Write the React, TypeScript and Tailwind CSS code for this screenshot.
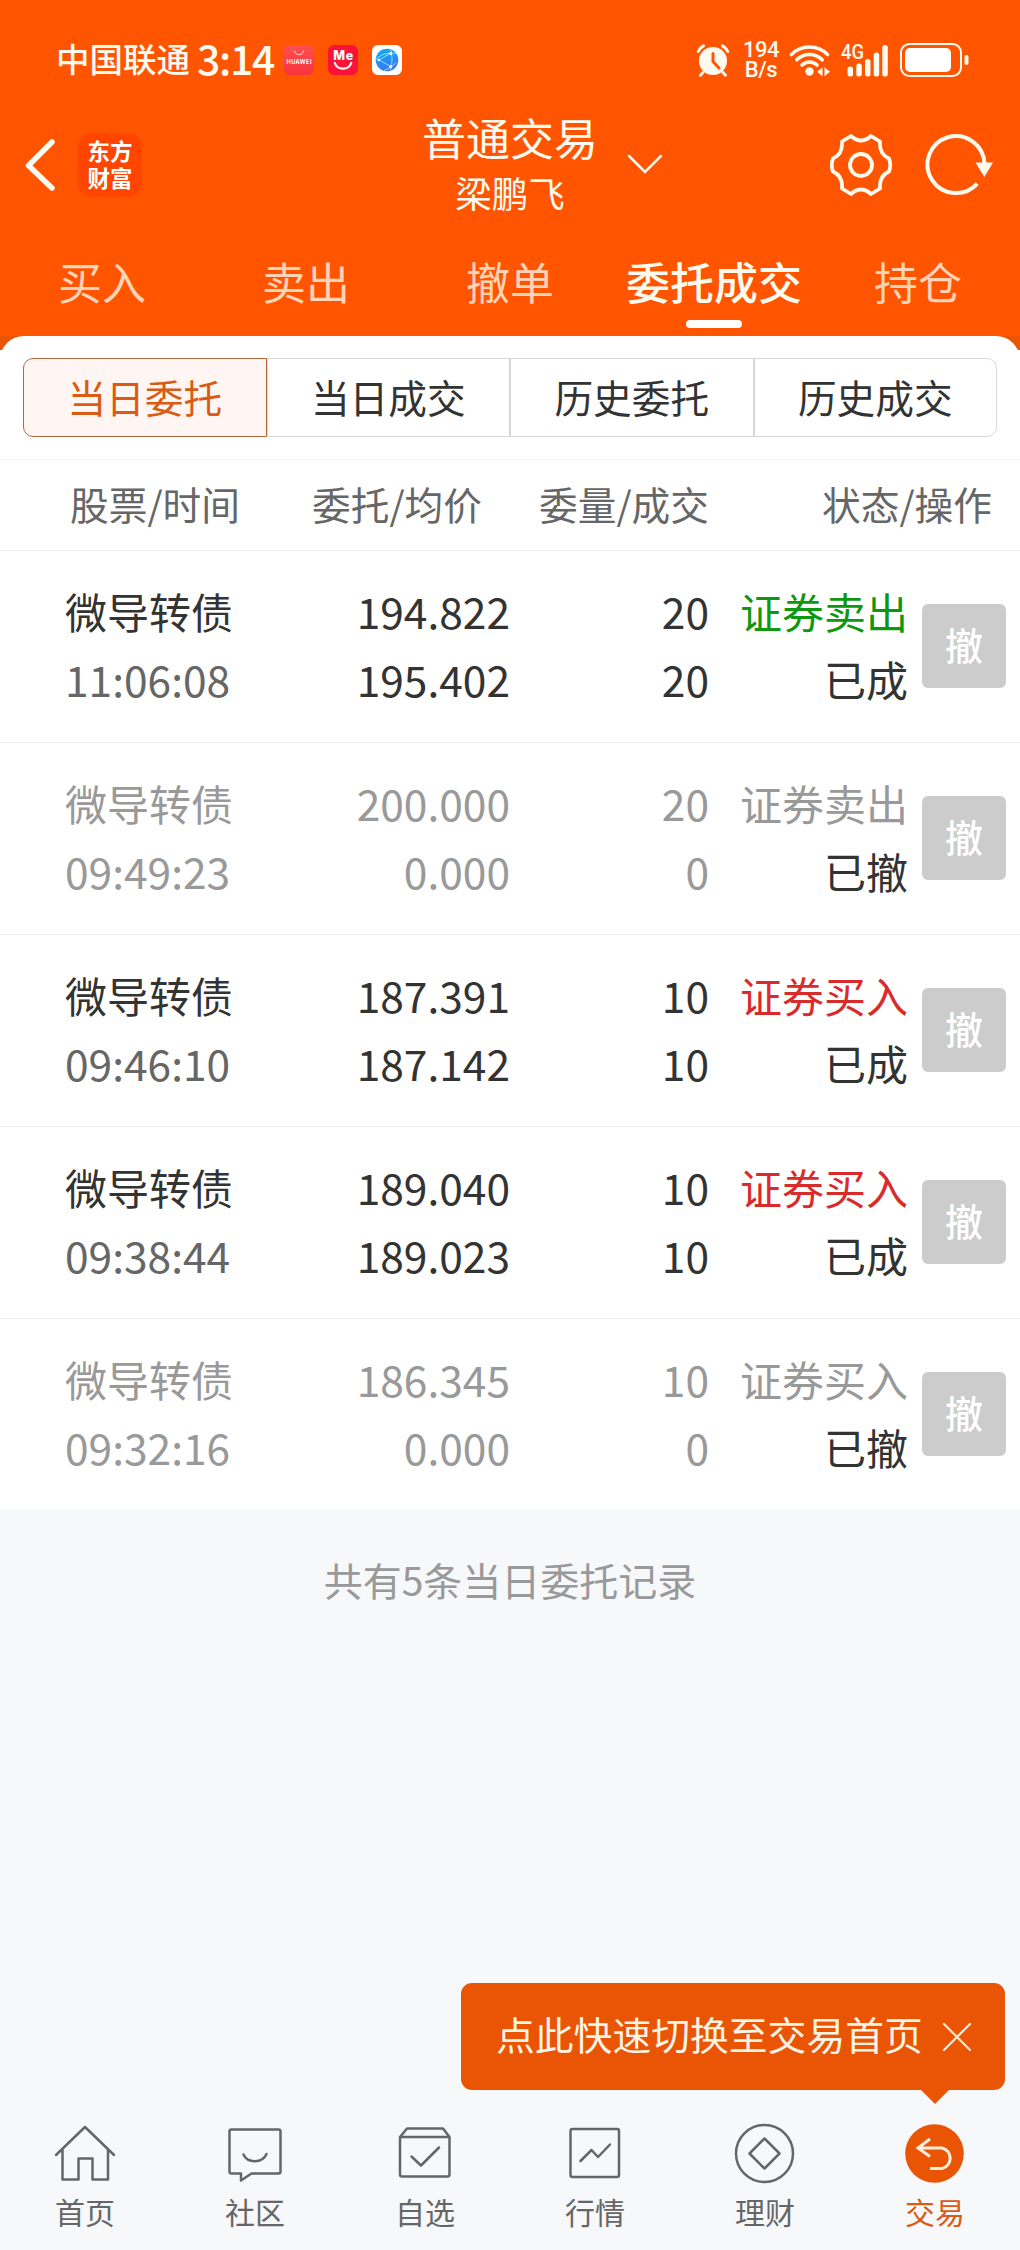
import React, { useState } from 'react';

// ─── Types ───────────────────────────────────────────────────────────────────
type Side = '证券卖出' | '证券买入';

interface Order {
  name:      string;
  time:      string;
  price:     string;
  avgPrice:  string;
  qty:       number;
  filled:    number;
  side:      Side;
  cancelled: boolean;
}

interface NavItem {
  label: string;
  icon:  React.ReactNode;
}

const ORDERS: Order[] = [
  { name: '微导转债', time: '11:06:08', price: '194.822', avgPrice: '195.402', qty: 20, filled: 20, side: '证券卖出', cancelled: false },
  { name: '微导转债', time: '09:49:23', price: '200.000', avgPrice: '0.000',   qty: 20, filled: 0,  side: '证券卖出', cancelled: true },
  { name: '微导转债', time: '09:46:10', price: '187.391', avgPrice: '187.142', qty: 10, filled: 10, side: '证券买入', cancelled: false },
  { name: '微导转债', time: '09:38:44', price: '189.040', avgPrice: '189.023', qty: 10, filled: 10, side: '证券买入', cancelled: false },
  { name: '微导转债', time: '09:32:16', price: '186.345', avgPrice: '0.000',   qty: 10, filled: 0,  side: '证券买入', cancelled: true },
];

const TABS = ['买入', '卖出', '撤单', '委托成交', '持仓'];
const SEGMENTS = ['当日委托', '当日成交', '历史委托', '历史成交'];

// ─── Status bar ──────────────────────────────────────────────────────────────
function AppBadges() {
  return (
    <div className="flex gap-[14px]">
      <svg width="30" height="30" viewBox="0 0 30 30">
        <defs>
          <linearGradient id="hw" x1="0" y1="0" x2="0" y2="1">
            <stop offset="0" stopColor="#ff5050" />
            <stop offset="1" stopColor="#f8333f" />
          </linearGradient>
        </defs>
        <rect width="30" height="30" rx="6" fill="url(#hw)" />
        <path d="M10.500 5.500a4.500 4.200 0 0 0 9 0" fill="none" stroke="#ffd9d0" strokeWidth="1" />
        <text x="15" y="19.300" textAnchor="middle" textLength="25" fontSize="5.600" fontWeight="700" fill="#fff" fontFamily="Inter, sans-serif">HUAWEI</text>
      </svg>
      <svg width="30" height="30" viewBox="0 0 30 30">
        <rect width="30" height="30" rx="6" fill="#fb1236" />
        <text x="15.200" y="15" textAnchor="middle" textLength="20" fontSize="12.500" fontWeight="800" fill="#fff" fontFamily="Inter, sans-serif">Me</text>
        <path d="M6.800 18c2.500 7.500 13.900 7.500 16.400 0" fill="none" stroke="#fff" strokeWidth="2.300" strokeLinecap="round" />
      </svg>
      <svg width="30" height="30" viewBox="0 0 30 30">
        <defs>
          <linearGradient id="globe" x1="0" y1="0" x2="0.300" y2="1">
            <stop offset="0" stopColor="#08b2f8" />
            <stop offset="1" stopColor="#3b78ee" />
          </linearGradient>
        </defs>
        <rect width="30" height="30" rx="6" fill="#fff" />
        <circle cx="15" cy="15" r="11.300" fill="url(#globe)" />
        <path d="M4 14.500C9 9 15 7.500 25 8.500M7 15l11-6.500M7 15l12 6.500M18.500 4.500c2 6 2 13 0 20.500M12 25.500c5-2 9-4 12-8" fill="none" stroke="#9fe0ff" strokeWidth="0.900" />
        <g fill="#fff"><circle cx="6.800" cy="15" r="1.200" /><circle cx="18.700" cy="8.500" r="1.400" /><circle cx="18.700" cy="21.500" r="1.500" /></g>
      </svg>
    </div>
  );
}

function AlarmIcon() {
  return (
    <svg width="34" height="34" viewBox="0 0 34 34" fill="none" strokeLinecap="round">
      <circle cx="17" cy="18" r="14" fill="#fffaf0" />
      <path d="M2.200 8.500Q4 4.500 7.500 2.800M31.800 8.500Q30 4.500 26.500 2.800M7 29.500l-2.500 2.700M27 29.500l2.500 2.700" stroke="#fffaf0" strokeWidth="3" />
      <path d="M17 10.500v8l6 6.500" stroke="#ff5500" strokeWidth="3" />
    </svg>
  );
}

function WifiIcon() {
  return (
    <svg width="42" height="34" viewBox="0 0 42 34" fill="none" stroke="#fffaf0" strokeWidth="3.600" strokeLinecap="round">
      <path d="M2.500 11.500a25.500 25.500 0 0 1 36 0" />
      <path d="M7.800 16.800a18 18 0 0 1 25.400 0" />
      <path d="M13 22a10.700 10.700 0 0 1 15 0" />
      <circle cx="20.500" cy="28.500" r="4.200" fill="#fffaf0" stroke="none" />
      <path d="M33.500 24.200v9l-5.500-4.500zM35.500 24.200v9l5.500-4.500z" fill="#fffaf0" stroke="none" />
    </svg>
  );
}

function SignalIcon() {
  return (
    <svg className="overflow-visible" width="50" height="34" viewBox="0 0 50 34" fill="#fffaf0">
      <text x="0" y="16.300" textLength="23" lengthAdjust="spacingAndGlyphs" fontSize="20" fontWeight="500" fontFamily="Roboto, sans-serif">4G</text>
      <rect x="6.500" y="23.500" width="5.500" height="10" rx="2.500" />
      <rect x="15.300" y="20.500" width="5.500" height="13" rx="2.500" />
      <rect x="24" y="16" width="5.500" height="17.500" rx="2.500" />
      <rect x="32.700" y="9.500" width="5.500" height="24" rx="2.500" />
      <rect x="41.300" y="2" width="5.500" height="31.500" rx="2.500" />
    </svg>
  );
}

function BatteryIcon() {
  return (
    <svg width="70" height="34" viewBox="0 0 70 34">
      <rect x="1" y="1" width="60" height="32" rx="8.500" fill="none" stroke="#fffaf0" strokeWidth="2" />
      <rect x="5" y="5" width="46" height="24" rx="5" fill="#fff" />
      <rect x="64.500" y="12" width="4" height="10" rx="2" fill="#fffaf0" />
    </svg>
  );
}

function StatusBar() {
  return (
    <div className="flex h-[120px] items-center pl-[56px] pr-[50px] text-[#fffaf0]">
      <span className="-mt-1 text-[33.500px] font-medium leading-[40px]">中国联通</span>
      <span className="-mt-[6px] ml-[7px] w-[79px] whitespace-nowrap text-[41px] font-medium leading-[40px] tracking-[-1.300px]">3:14</span>
      <div className="ml-[8px]"><AppBadges /></div>
      <div className="ml-auto flex items-center">
        <AlarmIcon />
        <div className="ml-[13px] flex w-[36px] flex-col items-center font-[Roboto] text-[22px] font-medium leading-[20px] tracking-[-0.500px]">
          <span>194</span>
          <span>B/s</span>
        </div>
        <div className="ml-[10px]"><WifiIcon /></div>
        <div className="ml-[10px]"><SignalIcon /></div>
        <div className="ml-[9px]"><BatteryIcon /></div>
      </div>
    </div>
  );
}

// ─── Header ──────────────────────────────────────────────────────────────────
function TitleBar() {
  return (
    <header className="grid grid-cols-[1fr_auto_1fr] grid-rows-[90px] items-center text-[#fffaf0]">
      <div className="flex items-center pl-[24px]">
        <svg width="32" height="54" viewBox="0 0 32 54" fill="none" stroke="#fffaf0" strokeWidth="5.500" strokeLinecap="round" strokeLinejoin="round">
          <path d="M28 4L4.500 27.500 28 50" />
        </svg>
        <div className="ml-[22px] flex h-[64px] w-[64px] flex-col items-center justify-center rounded-[14px] bg-[#ff4500] pb-[2px] text-[22.500px] font-bold leading-[27px] text-white">
          <span>东方</span>
          <span>财富</span>
        </div>
      </div>
      <div className="flex flex-col items-center">
        <h1 className="text-[44px] leading-[56px]">普通交易</h1>
        <p className="text-[36.500px] leading-[56px]">梁鹏飞</p>
      </div>
      <div className="flex items-center pl-[29px] pr-[25px]">
        <svg width="36" height="22" viewBox="0 0 36 22" fill="none" stroke="#fffaf0" strokeWidth="2.500" strokeLinecap="round">
          <path d="M2 2l16 16L34 2" />
        </svg>
        <svg className="ml-auto" width="64" height="64" viewBox="0 0 64 64" fill="none" stroke="#fffaf0" strokeWidth="3.800" strokeLinejoin="round">
          <path d="M22 3Q32 12 42 3L51 8.500Q50 21 60 25.500Q62.500 32 60 38.500Q50 43 51 55.500L42 61Q32 52 22 61L13 55.500Q14 43 4 38.500Q1.500 32 4 25.500Q14 21 13 8.500Z" />
          <circle cx="32" cy="32" r="11" />
        </svg>
        <svg className="ml-[30px]" width="72" height="64" viewBox="0 0 72 64" fill="none" stroke="#fffaf0" strokeWidth="4">
          <path d="M54.200 50.600A28.500 28.500 0 1 1 61.500 31" />
          <path d="M52.500 29.500h17.500l-8.700 14.500z" fill="#fffaf0" stroke="none" />
        </svg>
      </div>
    </header>
  );
}

interface TabBarProps {
  active:   string;
  onChange: (tab: string) => void;
}

function TabBar({ active, onChange }: TabBarProps) {
  return (
    <nav className="grid h-[126px] grid-cols-5">
      {TABS.map((tab) => (
        <button
          key={tab}
          onClick={() => onChange(tab)}
          className={[
            'flex flex-col items-center whitespace-nowrap pt-[41px] text-[44px] leading-[60px]',
            tab === active ? 'font-medium text-[#fffaf0]' : 'text-[#ffd3b8]',
          ].join(' ')}
        >
          {tab}
          {tab === active && <span className="mt-[9px] h-2 w-[56px] rounded-full bg-white" />}
        </button>
      ))}
    </nav>
  );
}

// ─── Orders ──────────────────────────────────────────────────────────────────
interface SegmentsProps {
  active:   string;
  onChange: (segment: string) => void;
}

function Segments({ active, onChange }: SegmentsProps) {
  return (
    <div className="mx-[23px] grid h-[79px] grid-cols-4">
      {SEGMENTS.map((segment) => (
        <button
          key={segment}
          onClick={() => onChange(segment)}
          className={[
            'border pb-[4px] text-[38.700px] leading-[60px] first:rounded-l-[10px] last:rounded-r-[10px]',
            segment === active
              ? 'border-[#b9683c] bg-[#fff6f3] text-[#d95b14]'
              : 'border-[#d5d7da] text-[#333333]',
          ].join(' ')}
        >
          {segment}
        </button>
      ))}
    </div>
  );
}

function OrderRow({ order }: { order: Order }) {
  const sideColor = order.side === '证券卖出' ? 'text-[#0f970f]' : 'text-[#d92b2b]';
  const main = order.cancelled ? 'text-[#999999]' : 'text-[#333333]';
  const muted = order.cancelled ? 'text-[#999999]' : 'text-[#666666]';

  return (
    <li className="flex h-[192px] border-t border-[#ececec] pt-[26px] text-[42px] leading-[68px]">
      <div className={`w-[255px] pl-[65px] ${main}`}>
        <p>{order.name}</p>
        <p className={`text-[42.500px] ${muted}`}>{order.time}</p>
      </div>
      <div className={`w-[255px] text-right text-[42.500px] ${main}`}>
        <p>{order.price}</p>
        <p>{order.avgPrice}</p>
      </div>
      <div className={`w-[199px] text-right text-[42.500px] ${main}`}>
        <p>{order.qty}</p>
        <p>{order.filled}</p>
      </div>
      <div className="w-[199px] text-right">
        <p className={order.cancelled ? 'text-[#999999]' : sideColor}>{order.side}</p>
        <p className="text-[#333333]">{order.cancelled ? '已撤' : '已成'}</p>
      </div>
      <button disabled className="ml-[14px] mt-[27px] h-[84px] w-[84px] rounded-md bg-[#cccccc] pb-[4px] text-[38px] font-medium leading-[60px] text-white">
        撤
      </button>
    </li>
  );
}

// ─── Bottom navigation ───────────────────────────────────────────────────────
function NavIcon({ children }: { children: React.ReactNode }) {
  return (
    <svg width="64" height="64" viewBox="0 0 64 64" fill="none" stroke="#666666" strokeWidth="2.500" strokeLinecap="round" strokeLinejoin="round">
      {children}
    </svg>
  );
}

const NAV: NavItem[] = [
  { label: '首页', icon: <NavIcon><path d="M3 33L32 5l29 28M9.500 27v30.500H25.500V36.500H39.500v21H55V27" /></NavIcon> },
  { label: '社区', icon: <NavIcon><path d="M8.500 7.500h47a2 2 0 0 1 2 2v40a2 2 0 0 1-2 2H28.500L18 58.500V51.500H8.500a2 2 0 0 1-2-2v-40a2 2 0 0 1 2-2zM20.500 32.500c4 9 19 9 23-.5" /></NavIcon> },
  { label: '自选', icon: <NavIcon><path d="M7 15h49.500v37.500a2 2 0 0 1-2 2H9a2 2 0 0 1-2-2zL14 6.500h36L56.500 15M18.500 34.500l9.500 9 18-18" /></NavIcon> },
  { label: '行情', icon: <NavIcon><rect x="7.500" y="7" width="48.500" height="48" rx="2" /><path d="M17.500 39l11-11 6.500 7L47 22.500" /></NavIcon> },
  { label: '理财', icon: <NavIcon><circle cx="31.500" cy="31.500" r="28.500" /><path d="M31.500 16.500l15 15-15 15-15-15z" /></NavIcon> },
  {
    label: '交易',
    icon: (
      <svg width="64" height="64" viewBox="0 0 64 64" fill="none" stroke="#ffeede" strokeWidth="3">
        <circle cx="31.500" cy="31.500" r="29.300" fill="#e95504" stroke="none" />
        <path d="M27 17L15 26l12 8.500M15 26h24a10.500 10.500 0 0 1 0 20.500H27" />
      </svg>
    ),
  },
];

function BottomNav() {
  return (
    <nav className="grid h-[162px] grid-cols-6">
      {NAV.map((item, i) => (
        <button
          key={item.label}
          className={[
            'flex flex-col items-center pt-[34px] text-[30px] leading-[40px]',
            i === NAV.length - 1 ? 'text-[#d95b14]' : 'text-[#666666]',
          ].join(' ')}
        >
          {item.icon}
          <span className="mt-[5px]">{item.label}</span>
        </button>
      ))}
    </nav>
  );
}

function QuickSwitchTip({ onClose }: { onClose: () => void }) {
  return (
    <div className="relative -mb-[2px] ml-auto mr-[15px] flex h-[107px] w-[544px] items-center rounded-[11px] bg-[#e95504] pl-[35px] text-[#fff3e4]">
      <span className="-mt-[7px] whitespace-nowrap text-[38.800px]">点此快速切换至交易首页</span>
      <button onClick={onClose} aria-label="关闭" className="ml-[18px]">
        <svg width="32" height="32" viewBox="0 0 32 32" fill="none" stroke="#ffe6cf" strokeWidth="2.300" strokeLinecap="round">
          <path d="M3 3l26 26M29 3L3 29" />
        </svg>
      </button>
      <svg className="absolute right-[55px] top-full" width="30" height="14" viewBox="0 0 30 14">
        <path d="M1 0h28L15 14z" fill="#e95504" />
      </svg>
    </div>
  );
}

// ─── Page ────────────────────────────────────────────────────────────────────
export default function App() {
  const [tab,     setTab]     = useState<string>('委托成交');
  const [segment, setSegment] = useState<string>('当日委托');
  const [showTip, setShowTip] = useState<boolean>(true);

  return (
    <div className="flex h-[2250px] w-[1020px] flex-col overflow-hidden bg-[#f7f8fa] font-['Noto_Sans_CJK_SC',sans-serif]">
      <div className="bg-[#ff5500]">
        <StatusBar />
        <TitleBar />
        <TabBar active={tab} onChange={setTab} />
      </div>

      <main className="bg-[linear-gradient(#e95504_14px,#ffffff_14px)]">
        <div className="rounded-t-[24px] bg-white pt-[22px]">
          <Segments active={segment} onChange={setSegment} />
          <div className="mt-[22px] flex h-[91px] border-t border-[#f5f5f5] pt-[13px] text-right text-[38.700px] leading-[60px] text-[#666666]">
            <span className="w-[240px]">股票/时间</span>
            <span className="w-[242px]">委托/均价</span>
            <span className="w-[227px]">委量/成交</span>
            <span className="w-[283px]">状态/操作</span>
          </div>
          <ul>
            {ORDERS.map((order) => (
              <OrderRow key={order.time} order={order} />
            ))}
          </ul>
        </div>
      </main>

      <p className="mt-[39px] text-center text-[39px] leading-[60px] text-[#999999]">
        共有{ORDERS.length}条当日委托记录
      </p>

      <div className="mt-auto">
        {showTip && <QuickSwitchTip onClose={() => setShowTip(false)} />}
        <BottomNav />
      </div>
    </div>
  );
}
